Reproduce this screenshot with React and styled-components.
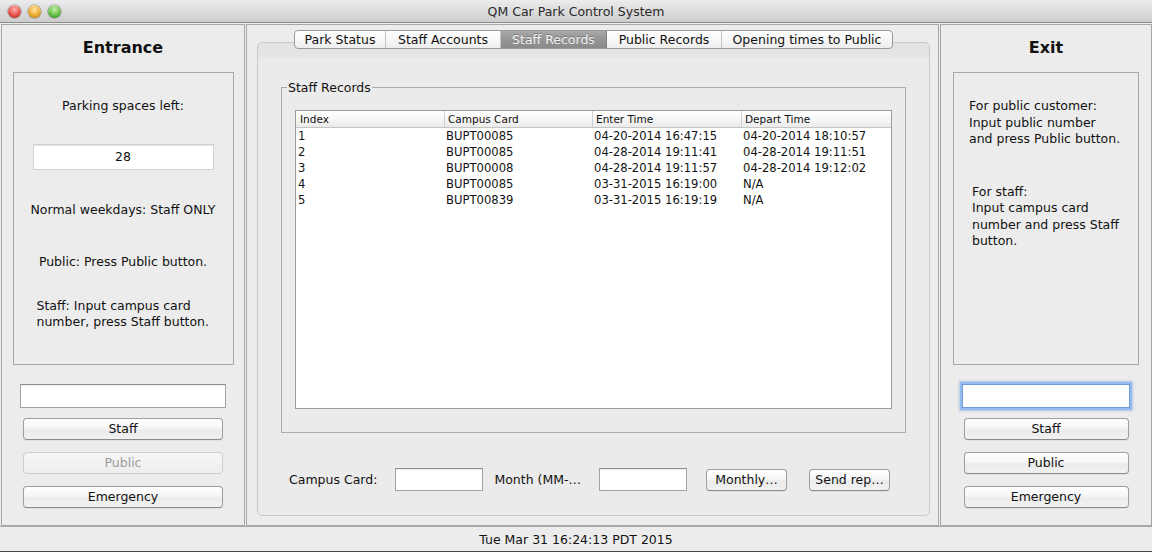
import React from "react";
import styled, { createGlobalStyle, css } from "styled-components";

const GlobalStyle = createGlobalStyle`
  html, body {
    margin: 0;
    padding: 0;
    background: #ececec;
  }
  * {
    box-sizing: border-box;
  }
`;

const Window = styled.div`
  width: 1152px;
  height: 552px;
  display: flex;
  flex-direction: column;
  background: #ececec;
  font-family: "DejaVu Sans", "Liberation Sans", sans-serif;
  font-size: 12.5px;
  color: #111;
  overflow: hidden;
`;

const TitleBar = styled.div`
  height: 23px;
  display: grid;
  grid-template-columns: 1fr auto 1fr;
  align-items: center;
  padding-top: 1px;
  background: linear-gradient(to bottom, #ececec 0%, #dcdcdc 50%, #cdcdcd 100%);
  border-bottom: 1px solid #8c8c8c;
`;

const Lights = styled.div`
  display: flex;
  gap: 7px;
  padding-left: 8px;
`;

const lightColors = {
  red: ["#ffb3ad", "#e0473d", "#a8261d"],
  yellow: ["#ffe7a8", "#e9a524", "#a86f0d"],
  green: ["#c9f0b0", "#59b83a", "#2d7a1c"],
};

const Light = styled.span`
  width: 13px;
  height: 13px;
  border-radius: 50%;
  ${({ $c }) => css`
    background: radial-gradient(circle at 50% 35%, ${lightColors[$c][0]} 0%, ${lightColors[$c][1]} 60%, ${lightColors[$c][2]} 100%);
  `}
  box-shadow: 0 0 0 0.5px rgba(0, 0, 0, 0.45), inset 0 1px 1px rgba(255, 255, 255, 0.5);
`;

const Title = styled.div`
  font-size: 12.5px;
  color: #2a2a2a;
  line-height: 21px;
`;

const Main = styled.div`
  height: 503px;
  display: flex;
  gap: 1px;
  padding: 1px 0 0 1px;
`;

const SidePanel = styled.div`
  width: ${({ $w }) => $w}px;
  height: 502px;
  border: 1px solid #a6a6a6;
  display: flex;
  flex-direction: column;
  align-items: center;
`;

const Heading = styled.h1`
  margin: 13px 0 0;
  font-size: 16px;
  font-weight: bold;
  line-height: 20px;
  color: #111;
`;

const InfoBox = styled.div`
  width: ${({ $w }) => $w}px;
  height: 293px;
  margin-top: 14px;
  border: 1px solid #a8a8a8;
  display: flex;
  flex-direction: column;
  align-items: center;
`;

const Caption = styled.div`
  margin-top: ${({ $mt }) => $mt}px;
  line-height: 16px;
  text-align: center;
`;

const Note = styled.div`
  align-self: flex-start;
  margin-top: ${({ $mt }) => $mt}px;
  padding-left: ${({ $indent }) => $indent}px;
  line-height: ${({ $lh }) => $lh || 16}px;
  text-align: left;
`;

const CountField = styled.div`
  width: 181px;
  height: 26px;
  margin-top: 30px;
  background: #fff;
  border: 1px solid #d2d2d2;
  box-shadow: inset 0 1px 0 #e2e2e2;
  text-align: center;
  line-height: 24px;
`;

const Field = styled.div`
  width: ${({ $w }) => $w}px;
  height: ${({ $h }) => $h || 24}px;
  margin-top: ${({ $mt }) => $mt || 0}px;
  margin-left: ${({ $ml }) => $ml || 0}px;
  flex-shrink: 0;
  background: #fff;
  border: 1px solid #a3a3a3;
  border-top-color: #8e8e8e;
  box-shadow: inset 0 1px 1px rgba(0, 0, 0, 0.08);
  ${({ $focus }) =>
    $focus &&
    css`
      border-color: #6c9bd8;
      box-shadow: 0 0 0 2px #94bbeb, 0 0 2px 3px rgba(120, 165, 225, 0.5);
    `}
`;

const Button = styled.div`
  width: ${({ $w }) => $w}px;
  height: 22px;
  margin-top: ${({ $mt }) => $mt || 0}px;
  margin-left: ${({ $ml }) => $ml || 0}px;
  flex-shrink: 0;
  border: 1px solid #9e9e9e;
  border-bottom-color: #8a8a8a;
  border-radius: 4px;
  background: linear-gradient(to bottom, #ffffff 0%, #f6f6f6 45%, #ebebeb 55%, #f1f1f1 100%);
  box-shadow: 0 1px 0 rgba(0, 0, 0, 0.05);
  text-align: center;
  line-height: 20px;
  color: #111;
  ${({ $disabled }) =>
    $disabled &&
    css`
      border-color: #cdcdcd;
      background: linear-gradient(to bottom, #f6f6f6 0%, #eeeeee 100%);
      color: #9b9b9b;
      box-shadow: none;
    `}
`;

const CenterPanel = styled.div`
  width: 693px;
  height: 502px;
  border: 1px solid #a6a6a6;
  display: flex;
  flex-direction: column;
  padding: 5px 8px 9px 10px;
`;

const TabStrip = styled.div`
  align-self: center;
  display: flex;
  height: 19px;
  border: 1px solid #9a9a9a;
  border-radius: 4px;
  overflow: hidden;
  position: relative;
  z-index: 1;
  background: linear-gradient(to bottom, #ffffff 0%, #f7f7f7 50%, #ededed 100%);
`;

const Tab = styled.div`
  width: ${({ $w }) => $w}px;
  height: 17px;
  line-height: 17px;
  text-align: center;
  white-space: nowrap;
  color: #111;
  & + & {
    border-left: 1px solid #c6c6c6;
  }
  ${({ $active }) =>
    $active &&
    css`
      background: linear-gradient(to bottom, #a8a8a8 0%, #959595 50%, #8a8a8a 100%);
      color: #f2f2f2;
      text-shadow: 0 -1px 0 rgba(0, 0, 0, 0.25);
      && {
        border-left: 1px solid #7e7e7e;
      }
      & + * {
        border-left: 1px solid #7e7e7e !important;
      }
    `}
`;

const TabPane = styled.div`
  flex: 1;
  margin-top: -7px;
  border: 1px solid #c9c9c9;
  border-radius: 5px;
  background: linear-gradient(to bottom, #e3e3e3 0px, #e5e5e5 14px, #ebebeb 15px, #ebebeb 100%);
  display: flex;
  flex-direction: column;
`;

const RecordsBox = styled.fieldset`
  margin: 36px 23px 0;
  padding: 14px 13px 23px;
  border: 1px solid #ababab;
  min-width: 0;
`;

const Legend = styled.legend`
  margin-left: -8px;
  padding: 1px 1px 0;
  line-height: 16px;
  color: #111;
`;

const TableScroll = styled.div`
  height: 299px;
  background: #fff;
  border: 1px solid #9b9b9b;
`;

const cols = "148px 148px 149px 1fr";

const HeaderRow = styled.div`
  display: grid;
  grid-template-columns: ${cols};
  height: 17px;
  border-bottom: 1px solid #c4c4c4;
  background: linear-gradient(to bottom, #ffffff 0%, #f4f4f4 60%, #ebebeb 100%);
  font-size: 10.5px;
  line-height: 16px;
  color: #111;
`;

const HeaderCell = styled.div`
  padding-left: 3px;
  & + & {
    border-left: 1px solid #cfcfcf;
  }
  &:first-child {
    padding-left: 4px;
  }
`;

const Row = styled.div`
  display: grid;
  grid-template-columns: ${cols};
  height: 16px;
  line-height: 16px;
  font-size: 11.6px;
  color: #111;
`;

const Cell = styled.div`
  padding-left: 2px;
  white-space: nowrap;
`;

const ReportRow = styled.div`
  display: flex;
  align-items: center;
  margin-top: 35px;
  padding-left: 31px;
`;

const Label = styled.span`
  margin-left: ${({ $ml }) => $ml || 0}px;
  white-space: nowrap;
`;

const StatusBar = styled.div`
  height: 26px;
  border-top: 1px solid #a9a9a9;
  border-bottom: 1px solid #4a4a4a;
  text-align: center;
  line-height: 25px;
  color: #111;
`;

const tabs = [
  { label: "Park Status", w: 90 },
  { label: "Staff Accounts", w: 115 },
  { label: "Staff Records", w: 106, active: true },
  { label: "Public Records", w: 115 },
  { label: "Opening times to Public", w: 171 },
];

const records = [
  ["1", "BUPT00085", "04-20-2014 16:47:15", "04-20-2014 18:10:57"],
  ["2", "BUPT00085", "04-28-2014 19:11:41", "04-28-2014 19:11:51"],
  ["3", "BUPT00008", "04-28-2014 19:11:57", "04-28-2014 19:12:02"],
  ["4", "BUPT00085", "03-31-2015 16:19:00", "N/A"],
  ["5", "BUPT00839", "03-31-2015 16:19:19", "N/A"],
];

const SideButtons = ({ w, publicDisabled }) => (
  <>
    <Button $w={w} $mt={10}>Staff</Button>
    <Button $w={w} $mt={12} $disabled={publicDisabled}>Public</Button>
    <Button $w={w} $mt={12}>Emergency</Button>
  </>
);

export default function App() {
  return (
    <Window>
      <GlobalStyle />
      <TitleBar>
        <Lights>
          <Light $c="red" />
          <Light $c="yellow" />
          <Light $c="green" />
        </Lights>
        <Title>QM Car Park Control System</Title>
        <div />
      </TitleBar>

      <Main>
        <SidePanel $w={244}>
          <Heading>Entrance</Heading>
          <InfoBox $w={221}>
            <Caption $mt={25}>Parking spaces left:</Caption>
            <CountField>28</CountField>
            <Caption $mt={32}>Normal weekdays: Staff ONLY</Caption>
            <Caption $mt={36}>Public: Press Public button.</Caption>
            <Note $mt={28} $indent={23}>
              Staff: Input campus card
              <br />
              number, press Staff button.
            </Note>
          </InfoBox>
          <Field $w={206} $mt={19} />
          <SideButtons w={200} publicDisabled />
        </SidePanel>

        <CenterPanel>
          <TabStrip>
            {tabs.map((t) => (
              <Tab key={t.label} $w={t.w} $active={t.active}>
                {t.label}
              </Tab>
            ))}
          </TabStrip>
          <TabPane>
            <RecordsBox>
              <Legend>Staff Records</Legend>
              <TableScroll>
                <HeaderRow>
                  <HeaderCell>Index</HeaderCell>
                  <HeaderCell>Campus Card</HeaderCell>
                  <HeaderCell>Enter Time</HeaderCell>
                  <HeaderCell>Depart Time</HeaderCell>
                </HeaderRow>
                {records.map((r) => (
                  <Row key={r[0]}>
                    {r.map((v, i) => (
                      <Cell key={i}>{v}</Cell>
                    ))}
                  </Row>
                ))}
              </TableScroll>
            </RecordsBox>
            <ReportRow>
              <Label>Campus Card:</Label>
              <Field $w={88} $h={23} $ml={18} />
              <Label $ml={11}>Month (MM-…</Label>
              <Field $w={88} $h={23} $ml={18} />
              <Button $w={81} $ml={19}>Monthly…</Button>
              <Button $w={81} $ml={22}>Send rep…</Button>
            </ReportRow>
          </TabPane>
        </CenterPanel>

        <SidePanel $w={212}>
          <Heading>Exit</Heading>
          <InfoBox $w={186}>
            <Note $mt={25} $indent={15} $lh={16.5}>
              For public customer:
              <br />
              Input public number
              <br />
              and press Public button.
            </Note>
            <Note $mt={36} $indent={18} $lh={16.5}>
              For staff:
              <br />
              Input campus card
              <br />
              number and press Staff
              <br />
              button.
            </Note>
          </InfoBox>
          <Field $w={168} $mt={19} $focus />
          <SideButtons w={165} />
        </SidePanel>
      </Main>

      <StatusBar>Tue Mar 31 16:24:13 PDT 2015</StatusBar>
    </Window>
  );
}
